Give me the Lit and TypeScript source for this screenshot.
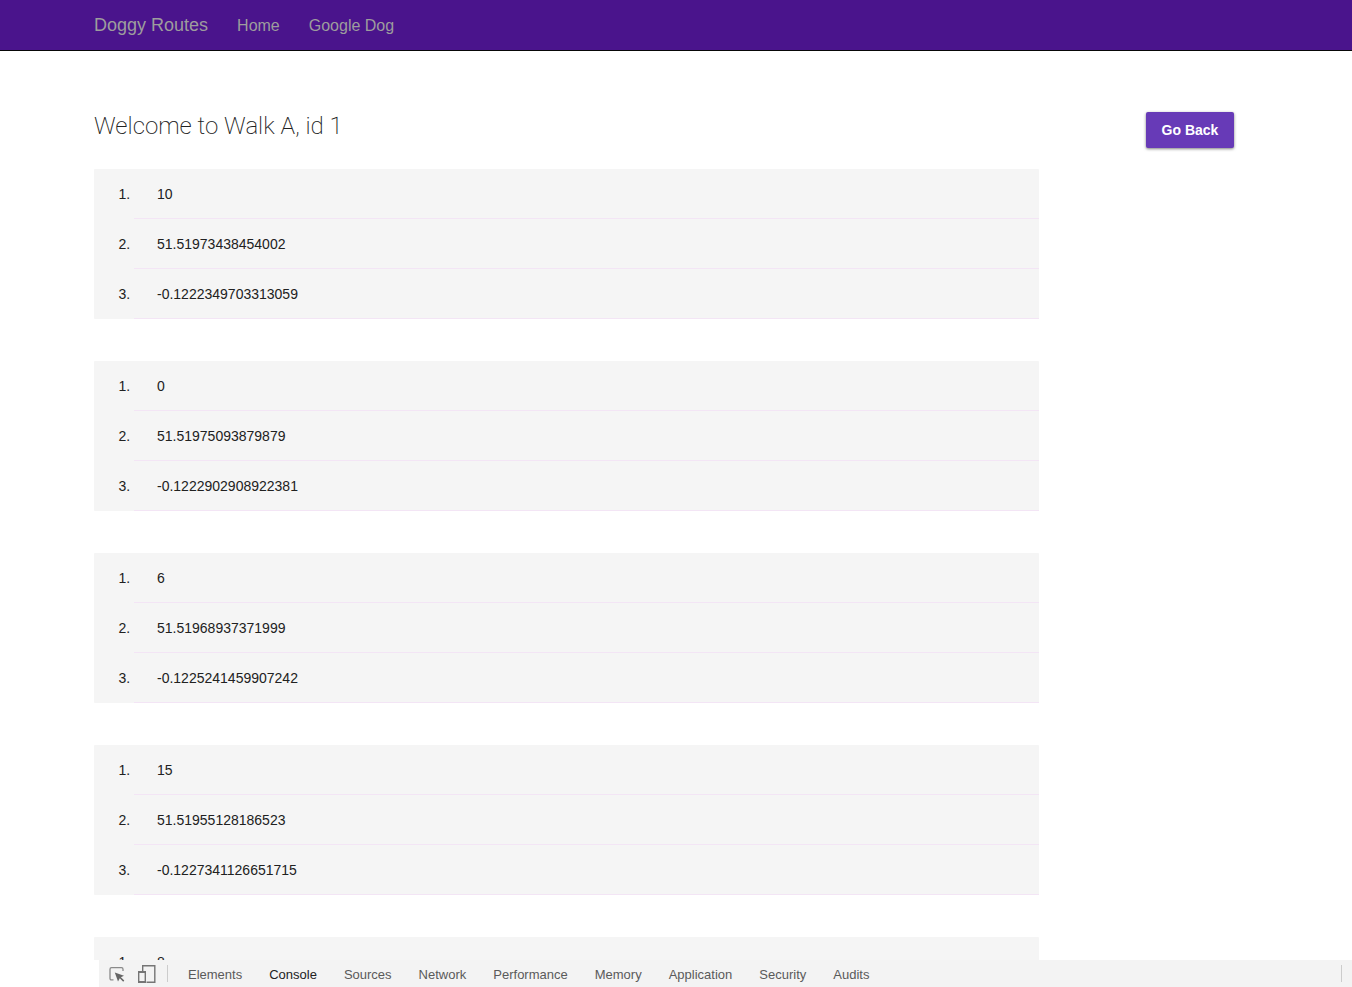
import { LitElement, html, css } from "lit";
import { customElement, state } from "lit/decorators.js";

@customElement("app-root")
export class AppRoot extends LitElement {
  static styles = css`
    :host {
      display: flex;
      flex-direction: column;
      height: 100vh;
      background: #fff;
      color: #212121;
      font-family: "Liberation Sans", Arial, sans-serif;
      font-size: 14px;
      line-height: 20px;
    }
    .navbar {
      flex: none;
      background: #4a148c;
      border-bottom: 1px solid #080808;
      padding-right: 24px;
    }
    .container {
      max-width: 1140px;
      margin: 0 auto;
    }
    .nav {
      display: flex;
      align-items: baseline;
      gap: 29px;
      box-sizing: border-box;
      height: 50px;
      padding: 15px 0 0;
      font-size: 16px;
    }
    .nav a {
      color: #9d9d9d;
      text-decoration: none;
    }
    .nav .brand {
      font-size: 18px;
    }
    .page {
      flex: 1;
      min-height: 0;
      overflow-y: auto;
      scrollbar-width: none;
      padding-right: 24px;
    }
    .head {
      display: flex;
      justify-content: space-between;
      align-items: flex-start;
      padding-top: 61px;
      height: 57px;
    }
    h1 {
      margin: 0;
      font-family: Roboto, "Liberation Sans", sans-serif;
      font-size: 24px;
      line-height: 28px;
      font-weight: 200;
    }
    .back {
      height: 36px;
      min-width: 88px;
      padding: 0 15px;
      border: 0;
      border-radius: 2px;
      background: #673ab7;
      box-shadow: 0 1px 3px rgba(0, 0, 0, 0.5);
      color: #fff;
      font: bold 14px/36px "Liberation Sans", Arial, sans-serif;
      cursor: pointer;
    }
    .routes {
      display: grid;
      gap: 42px;
      margin-right: 195px;
    }
    ol {
      margin: 0;
      padding: 0 0 0 40px;
      background: #f5f5f5;
      border-radius: 1px;
    }
    li {
      padding: 15px 23px 14px;
      border-bottom: 1px solid #f3e5f5;
    }
    .tools {
      flex: none;
      display: flex;
      align-items: center;
      height: 27px;
      margin-left: 99px;
      padding: 0 10px;
      background: #f3f3f3;
      font-size: 13px;
    }
    .tools button {
      display: flex;
      padding: 0;
      border: 0;
      background: none;
      color: #5a5a5a;
      font: inherit;
      cursor: pointer;
    }
    .icons {
      display: flex;
      gap: 12px;
    }
    .tabs {
      display: flex;
      gap: 27px;
      margin: 0 auto 0 20px;
      padding-top: 2px;
    }
    .tools .active {
      color: #222;
    }
    .rule {
      width: 1px;
      height: 17px;
      background: #ccc;
    }
    .icons + .rule {
      margin-left: 11px;
    }
  `;

  private walks = [
    ["10", "51.51973438454002", "-0.1222349703313059"],
    ["0", "51.51975093879879", "-0.1222902908922381"],
    ["6", "51.51968937371999", "-0.1225241459907242"],
    ["15", "51.51955128186523", "-0.1227341126651715"],
    ["8"],
  ];

  private tabs = ["Elements", "Console", "Sources", "Network", "Performance", "Memory", "Application", "Security", "Audits"];

  @state() private activeTab = "Console";

  render() {
    return html`
      <header class="navbar">
        <nav class="container nav">
          <a class="brand" href="#">Doggy Routes</a>
          <a href="#">Home</a>
          <a href="#">Google Dog</a>
        </nav>
      </header>
      <main class="page">
        <div class="container">
          <div class="head">
            <h1>Welcome to Walk A, id 1</h1>
            <button class="back" type="button">Go Back</button>
          </div>
          <div class="routes">
            ${this.walks.map((walk) => html`<ol>${walk.map((value) => html`<li>${value}</li>`)}</ol>`)}
          </div>
        </div>
      </main>
      <footer class="tools">
        <div class="icons">
          <button type="button" aria-label="Inspect">
            <svg width="17" height="18" viewBox="0 0 17 18" fill="none">
              <path d="M4.500 14.800H2.500Q1 14.800 1 13.300V4.200Q1 2.700 2.500 2.700H12.500Q14 2.700 14 4.200V6" stroke="#8a8a8a" stroke-width="1.300" />
              <path d="M5.800 7.500L15 10.800L11.900 12.200L15.300 15.600L14.200 16.700L10.800 13.300L9 16.500Z" fill="#666" />
            </svg>
          </button>
          <button type="button" aria-label="Toggle device">
            <svg width="18" height="18" viewBox="0 0 18 18" fill="none">
              <path d="M4.700 6V0.700H16.800V17.300H8.500" stroke="#757575" stroke-width="1.400" />
              <path d="M0.700 6.700H7.300V17.300H0.700Z" stroke="#757575" stroke-width="1.400" />
              <path d="M0 6H8V8H0ZM0 16H8V18H0Z" fill="#757575" />
            </svg>
          </button>
        </div>
        <span class="rule"></span>
        <div class="tabs">
          ${this.tabs.map(
            (tab) => html`<button
              type="button"
              class=${tab === this.activeTab ? "active" : ""}
              @click=${() => (this.activeTab = tab)}
            >${tab}</button>`
          )}
        </div>
        <span class="rule"></span>
      </footer>
    `;
  }
}
